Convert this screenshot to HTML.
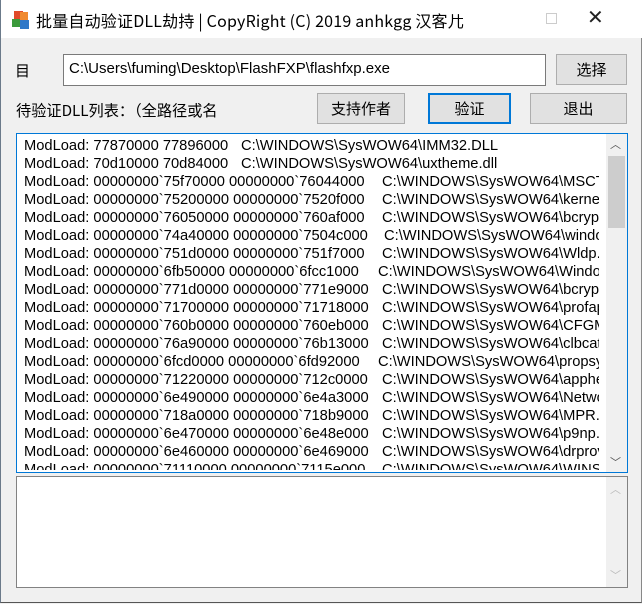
<!DOCTYPE html>
<html><head><meta charset="utf-8"><style>
*{margin:0;padding:0;box-sizing:border-box}
body{width:642px;height:604px;background:#f0f0f0;position:relative;overflow:hidden;font-family:"Liberation Sans","Noto Sans CJK SC",sans-serif;color:#000}
.win{position:absolute;left:0;top:0;width:642px;height:603px;border-left:1px solid #6b7a8a;border-right:1px solid #888;border-bottom:1px solid #555;background:#f0f0f0}
.title{position:absolute;left:0;top:0;width:642px;height:38px;background:#fff}
.title .t{position:absolute;left:35px;top:8px;font-size:16px;font-family:"Noto Sans CJK SC","Liberation Sans",sans-serif;white-space:nowrap;letter-spacing:0.2px}
.a{position:absolute}
.btn{position:absolute;background:#e1e1e1;border:1px solid #adadad;font-size:15px;text-align:center;font-family:"Noto Sans CJK SC",sans-serif}
.box{position:absolute;background:#fff;border:1px solid #7a7a7a}
.lines{position:absolute;left:7px;top:3px;width:575px;overflow:hidden;height:333px}
.ln{position:relative;height:18px;font-size:14.7px;line-height:18px;white-space:nowrap}
.ln span{position:absolute;top:0}
.sb{position:absolute;right:0;top:0;width:21px;bottom:0;background:#f0f0f0}
</style></head><body>
<div class="win">
<div class="title">
<svg class="a" style="left:9px;top:9px" width="21" height="21" viewBox="0 0 21 21">
<rect x="4" y="2" width="9" height="8" fill="#e04a2a"/><rect x="10" y="3" width="8" height="8" fill="#f08a30"/>
<rect x="2" y="10" width="8" height="8" fill="#3c9a3c"/><rect x="10" y="11" width="9" height="9" fill="#2f78c8"/>
</svg>
<div class="t">批量自动验证DLL劫持 | CopyRight (C) 2019 anhkgg 汉客儿</div>
<div class="a" style="left:451px;top:18px;width:11px;height:1px;background:#000"></div>
<div class="a" style="left:545px;top:13px;width:11px;height:11px;border:1px solid #ccc"></div>
<div class="a" style="left:586px;top:5px;font-size:20px;font-weight:300;color:#222">✕</div>
</div>
<div class="a" style="left:14px;top:60px;font-size:15px;font-family:'Noto Sans CJK SC',sans-serif">目</div>
<div class="box" style="left:62px;top:54px;width:483px;height:32px;border-color:#7a7a7a"><div style="position:absolute;left:5px;top:5px;font-size:15px">C:\Users\fuming\Desktop\FlashFXP\flashfxp.exe</div></div>
<div class="btn" style="left:555px;top:54px;width:71px;height:31px;line-height:29px">选择</div>
<div class="a" style="left:15px;top:99px;font-size:15.2px;font-family:'Noto Sans CJK SC',sans-serif;white-space:nowrap">待验证DLL列表：（全路径或名</div>
<div class="btn" style="left:316px;top:93px;width:88px;height:31px;line-height:29px">支持作者</div>
<div class="btn" style="left:427px;top:93px;width:83px;height:31px;line-height:27px;border:2px solid #0078d7">验证</div>
<div class="btn" style="left:529px;top:93px;width:97px;height:31px;line-height:29px">退出</div>
<div class="box" style="left:15px;top:133px;width:612px;height:340px;border-color:#0078d7">
<div class="lines">
<div class="ln">ModLoad: 77870000 77896000<span style="left:217px">C:\WINDOWS\SysWOW64\IMM32.DLL</span></div>
<div class="ln">ModLoad: 70d10000 70d84000<span style="left:217px">C:\WINDOWS\SysWOW64\uxtheme.dll</span></div>
<div class="ln">ModLoad: 00000000`75f70000 00000000`76044000<span style="left:358px">C:\WINDOWS\SysWOW64\MSCTF.dll</span></div>
<div class="ln">ModLoad: 00000000`75200000 00000000`7520f000<span style="left:358px">C:\WINDOWS\SysWOW64\kernel.appcore.dll</span></div>
<div class="ln">ModLoad: 00000000`76050000 00000000`760af000<span style="left:358px">C:\WINDOWS\SysWOW64\bcryptPrimitives.dll</span></div>
<div class="ln">ModLoad: 00000000`74a40000 00000000`7504c000<span style="left:360px">C:\WINDOWS\SysWOW64\windows.storage.dll</span></div>
<div class="ln">ModLoad: 00000000`751d0000 00000000`751f7000<span style="left:358px">C:\WINDOWS\SysWOW64\Wldp.dll</span></div>
<div class="ln">ModLoad: 00000000`6fb50000 00000000`6fcc1000<span style="left:354px">C:\WINDOWS\SysWOW64\Windows.dll</span></div>
<div class="ln">ModLoad: 00000000`771d0000 00000000`771e9000<span style="left:358px">C:\WINDOWS\SysWOW64\bcrypt.dll</span></div>
<div class="ln">ModLoad: 00000000`71700000 00000000`71718000<span style="left:358px">C:\WINDOWS\SysWOW64\profapi.dll</span></div>
<div class="ln">ModLoad: 00000000`760b0000 00000000`760eb000<span style="left:358px">C:\WINDOWS\SysWOW64\CFGMGR32.dll</span></div>
<div class="ln">ModLoad: 00000000`76a90000 00000000`76b13000<span style="left:358px">C:\WINDOWS\SysWOW64\clbcatq.dll</span></div>
<div class="ln">ModLoad: 00000000`6fcd0000 00000000`6fd92000<span style="left:354px">C:\WINDOWS\SysWOW64\propsys.dll</span></div>
<div class="ln">ModLoad: 00000000`71220000 00000000`712c0000<span style="left:358px">C:\WINDOWS\SysWOW64\apphelp.dll</span></div>
<div class="ln">ModLoad: 00000000`6e490000 00000000`6e4a3000<span style="left:358px">C:\WINDOWS\SysWOW64\Netwo.dll</span></div>
<div class="ln">ModLoad: 00000000`718a0000 00000000`718b9000<span style="left:358px">C:\WINDOWS\SysWOW64\MPR.dll</span></div>
<div class="ln">ModLoad: 00000000`6e470000 00000000`6e48e000<span style="left:358px">C:\WINDOWS\SysWOW64\p9np.dll</span></div>
<div class="ln">ModLoad: 00000000`6e460000 00000000`6e469000<span style="left:358px">C:\WINDOWS\SysWOW64\drprov.dll</span></div>
<div class="ln">ModLoad: 00000000`71110000 00000000`7115e000<span style="left:358px">C:\WINDOWS\SysWOW64\WINSTA.dll</span></div>
</div>
<div class="sb"><div style="position:absolute;left:4px;top:2px;font-size:11px;color:#555">︿</div><div style="position:absolute;left:2px;top:22px;width:17px;height:72px;background:#cdcdcd"></div><div style="position:absolute;left:4px;bottom:2px;font-size:11px;color:#555">﹀</div></div>
</div>
<div class="box" style="left:15px;top:476px;width:612px;height:112px;border-color:#828282">
<div class="sb"><div style="position:absolute;left:4px;top:4px;font-size:11px;color:#bbb">︿</div><div style="position:absolute;left:4px;bottom:4px;font-size:11px;color:#bbb">﹀</div></div>
</div>
</div>
</body></html>
